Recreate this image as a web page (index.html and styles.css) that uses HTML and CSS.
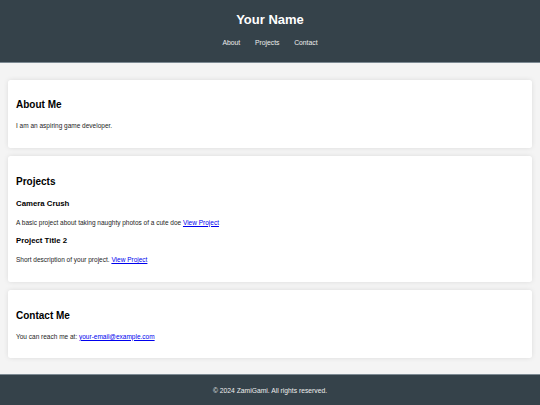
FILE: index.html
```html
<!doctype html>

<html lang="en">
  <head>
    <meta charset="utf-8"/>
    <title>Your Name</title>
    <meta name="viewport" content="width=device-width,initial-scale=1.0"/>
    <link rel="stylesheet" href="styles.css">
  </head>
  <body>
    <header class="header">
      <h1 class="header__title">Your Name</h1>
      <nav>
        <ul class="nav">
          <li><a class="nav__link" href="#about">About</a></li>
          <li><a class="nav__link" href="#projects">Projects</a></li>
          <li><a class="nav__link" href="#contact">Contact</a></li>
        </ul>
      </nav>
    </header>

    <main class="main">
      <section class="card" id="about">
        <h2 class="card__title">About Me</h2>
        <p class="card__text">I am an aspiring game developer.</p>
      </section>

      <section class="card" id="projects">
        <h2 class="card__title">Projects</h2>
        <div class="project">
          <h3 class="project__title">Camera Crush</h3>
          <p class="card__text">A basic project about taking naughty photos of a cute doe <a href="#">View Project</a></p>
        </div>
        <div class="project">
          <h3 class="project__title">Project Title 2</h3>
          <p class="card__text">Short description of your project. <a href="#">View Project</a></p>
        </div>
      </section>

      <section class="card" id="contact">
        <h2 class="card__title">Contact Me</h2>
        <p class="card__text">You can reach me at: <a href="mailto:your-email@example.com">your-email@example.com</a></p>
      </section>
    </main>

    <footer class="footer">
      <p class="footer__text">&copy; 2024 ZamiGami. All rights reserved.</p>
    </footer>
  </body>
</html>
```

FILE: styles.css
```css
body {
  font-family: "Liberation Sans", Arial, sans-serif;
  font-size: 6.5px;
  line-height: 1.6;
  color: #1c1c1c;
  background-color: #f4f4f4;
  margin: 0;
}
a {
  color: #0000ee;
}
.header {
  background-color: #35424a;
  color: #fff;
  text-align: center;
  padding: 10px 0 13px;
  border-bottom: 1px solid #7d8a93;
}
.header__title {
  font-size: 13px;
  margin: 0 0 7px;
}
.nav {
  display: flex;
  justify-content: center;
  gap: 14.7px;
  list-style: none;
  margin: 0;
  padding: 0;
}
.nav__link {
  color: #eee;
  font-size: 6.8px;
  text-decoration: none;
}
.main {
  display: flex;
  flex-direction: column;
  gap: 8.4px;
  padding: 17px 8px 16px;
}
.card {
  background-color: #fff;
  border-radius: 2.5px;
  box-shadow: 0 0 5px rgba(0, 0, 0, 0.1);
  padding: 10px 8px 9.5px;
}
.card__title {
  color: #000;
  font-size: 10px;
  margin: 7.8px 0;
}
.card__text {
  margin: 6.5px 0;
}
.project__title {
  color: #000;
  font-size: 7.8px;
  margin: 7.4px 0;
}
.footer {
  background-color: #35424a;
  color: #eee;
  text-align: center;
  padding: 11px 0;
  border-top: 1px solid #7d8a93;
}
.footer__text {
  font-size: 6.75px;
  margin: 0;
}
```
